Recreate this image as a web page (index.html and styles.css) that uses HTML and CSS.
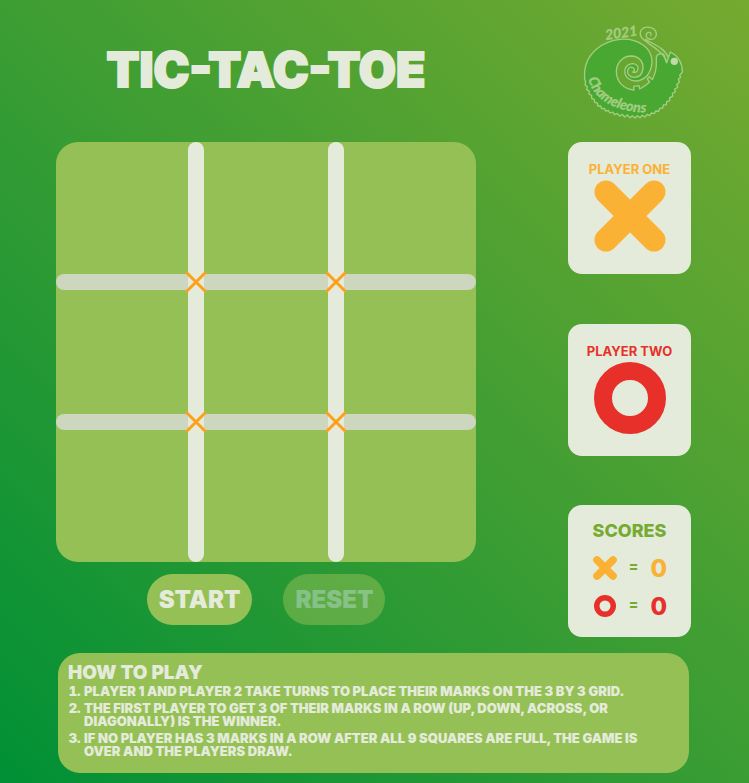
FILE: index.html
```html
<!DOCTYPE html>
<html lang="en">
<head>
<meta charset="utf-8">
<meta name="viewport" content="width=device-width, initial-scale=1">
<title>Tic-Tac-Toe</title>
<link rel="stylesheet" href="styles.css">
</head>
<body>
<svg width="0" height="0" class="defs" aria-hidden="true">
  <symbol id="cross" viewBox="0 0 72 72"><path d="M12 12L60 60M60 12L12 60" fill="none" stroke="currentColor" stroke-width="23" stroke-linecap="round"/></symbol>
  <symbol id="nought" viewBox="0 0 72 72"><circle cx="36" cy="36" r="27" fill="none" stroke="currentColor" stroke-width="18"/></symbol>
</svg>
<div class="page">
  <header class="header">
    <h1 class="title">TIC-TAC-TOE</h1>
    <svg class="logo" viewBox="-6 30 369 300" role="img" aria-label="2021 Chameleons">
      <path class="logo-body" d="M290 158L282 134Q276 128 262 135Q258 140 259 150C260 178 256 190 247 209L238 200L232 207L239 216Q229 226 209 237L207 227L191 229L192 240C160 238 139 214 139 184C140 157 160 138 184 138C208 139 221 156 219 176C217 193 206 202 192 202C178 201 170 192 173 180C175 171 187 168 192 176Q196 183 188 186Q202 190 204 176C205 164 191 157 178 163C160 171 161 194 174 205C194 221 222 211 235 192C254 160 248 125 219 105C179 77 121 84 81 116C53 139 41 173 44 207L47 216L45 224L52 230L50 239L58 243L57 252L65 256L65 265L73 268L74 277L82 279L84 288L92 288L95 296L103 295L107 303L115 301L120 309L128 306L134 314L142 310L149 318L157 313L164 321L172 315L180 323L187 317L195 324L202 317L210 323L217 316L225 321L231 313L239 317L244 309L253 311L257 303L266 304L269 295L278 294L280 285L289 284L290 275L299 272L299 263L308 259L307 250L316 246L314 237L323 232L320 224L328 217L325 208L332 202L329 196L337 186C337 168 331 141 301 126L297 138L290 158Z"/>
      <path class="logo-line" d="M290 158C281 119 226 101 213 80C205 61 220 49 238 52C258 55 264 72 255 83C246 93 226 87 229 73C233 63 247 67 242 76M295 142C284 113 246 101 227 88"/>
      <circle class="logo-eye" cx="313" cy="154" r="11"/>
      <path id="name-curve" d="M55 206C64 252 118 312 244 307" fill="none"/>
      <text class="logo-year" x="107" y="90" transform="rotate(-8 107 90)">2021</text>
      <text class="logo-name"><textPath href="#name-curve">Chameleons</textPath></text>
    </svg>
  </header>
  <main class="game">
    <section class="play">
      <div class="board">
        <div class="cells">
          <button aria-label="Square 1"></button><button aria-label="Square 2"></button><button aria-label="Square 3"></button>
          <button aria-label="Square 4"></button><button aria-label="Square 5"></button><button aria-label="Square 6"></button>
          <button aria-label="Square 7"></button><button aria-label="Square 8"></button><button aria-label="Square 9"></button>
        </div>
        <svg class="lines" viewBox="0 0 420 420" aria-hidden="true">
          <g fill="#cdd6bf"><rect y="132" width="420" height="16" rx="8"/><rect y="272" width="420" height="16" rx="8"/></g>
          <g fill="#e4ebda"><rect x="132" width="16" height="420" rx="8"/><rect x="272" width="16" height="420" rx="8"/></g>
          <g fill="none" stroke="#fda01a" stroke-width="3" stroke-linecap="round">
            <path d="M131 131L149 149M149 131L131 149M271 131L289 149M289 131L271 149M131 271L149 289M149 271L131 289M271 271L289 289M289 271L271 289"/>
          </g>
        </svg>
      </div>
      <div class="actions">
        <button class="action">START</button>
        <button class="action" disabled>RESET</button>
      </div>
    </section>
    <aside class="side">
      <section class="card one"><h2>PLAYER ONE</h2><svg class="mark"><use href="#cross"/></svg></section>
      <section class="card two"><h2>PLAYER TWO</h2><svg class="mark"><use href="#nought"/></svg></section>
      <section class="card scores">
        <h2>SCORES</h2>
        <div class="score one"><svg><use href="#cross"/></svg><span class="equals">=</span><output>0</output></div>
        <div class="score two"><svg class="small"><use href="#nought"/></svg><span class="equals">=</span><output>0</output></div>
      </section>
    </aside>
  </main>
  <section class="rules">
    <h2>HOW TO PLAY</h2>
    <ol>
      <li>PLAYER 1 AND PLAYER 2 TAKE TURNS TO PLACE THEIR MARKS ON THE 3 BY 3 GRID.</li>
      <li>THE FIRST PLAYER TO GET 3 OF THEIR MARKS IN A ROW (UP, DOWN, ACROSS, OR DIAGONALLY) IS THE WINNER.</li>
      <li>IF NO PLAYER HAS 3 MARKS IN A ROW AFTER ALL 9 SQUARES ARE FULL, THE GAME IS OVER AND THE PLAYERS DRAW.</li>
    </ol>
  </section>
</div>
</body>
</html>
```
FILE: styles.css
```css
* { box-sizing: border-box; margin: 0; padding: 0; }
body {
  min-height: 100vh;
  color: #e4ebda;
  font-family: Inter, "Liberation Sans", sans-serif;
  font-weight: 900;
  background: linear-gradient(45deg, #009036, #76aa30);
}
button { border: 0; font: inherit; color: inherit; cursor: pointer; }
.defs { position: absolute; }
.page { padding: 20px 58px 10px 56px; }
.header, .game {
  display: grid;
  grid-template-columns: 420fr 123fr;
  column-gap: 92px;
}
.header { align-items: center; margin-bottom: 22px; }
.title { text-align: center; font-size: 48px; line-height: 60px; font-weight: 900; white-space: nowrap; -webkit-text-stroke: 2px; }
.logo { display: block; width: 100%; }
.logo-body { fill: #48a832; stroke: #a3ce82; stroke-width: 4; stroke-linejoin: round; }
.logo-line { fill: none; stroke: #a3ce82; stroke-width: 4; stroke-linecap: round; }
.logo-eye { fill: #c1dba7; }
.logo-year, .logo-name { fill: #a3ce82; stroke: #a3ce82; stroke-width: 1; font-family: Lato, sans-serif; font-style: italic; font-weight: 700; }
.logo-year { font-size: 42px; }
.logo-name { font-size: 42px; }

.board { position: relative; aspect-ratio: 1; border-radius: 22px; background: #95c056; overflow: hidden; }
.cells { display: grid; grid-template: repeat(3, 1fr) / repeat(3, 1fr); height: 100%; }
.cells button { background: transparent; }
.lines { position: absolute; inset: 0; width: 100%; height: 100%; pointer-events: none; }
.actions { display: flex; justify-content: center; gap: 31px; margin-top: 12px; }
.action { height: 51px; padding: 0 12px; border-radius: 26px; background: #95c056; font-size: 24px; }
.action:disabled { opacity: 0.5; }

.side { display: flex; flex-direction: column; justify-content: space-between; gap: 16px; margin-bottom: -12px; }
.card { display: flex; flex-direction: column; align-items: center; min-height: 132px; border-radius: 14px; background: #e4ebda; padding-top: 20px; }
.card h2 { font-size: 13px; line-height: 14px; font-weight: 700; white-space: nowrap; }
.one { color: #fbb134; }
.two { color: #e73029; }
.mark { width: 72px; height: 72px; margin-top: 4px; }
.scores { padding-top: 14px; }
.card.scores h2 { color: #76aa30; font-size: 18px; line-height: 24px; font-weight: 800; margin-bottom: 6px; }
.score { display: grid; grid-template-columns: 24px 1fr 16px; align-items: center; width: 74px; height: 38px; text-align: center; font-size: 24px; font-weight: 800; }
.score svg { width: 24px; height: 24px; justify-self: center; }
.score .small { width: 22px; height: 22px; }
.equals { color: #76aa30; font-size: 14px; line-height: 20px; padding-bottom: 4px; }

.rules { margin: 28px 2px 0 2px; min-height: 120px; padding: 10px 28px 10px 10px; border-radius: 22px; background: #95c056; }
.rules h2 { font-size: 19px; line-height: 20px; font-weight: 900; }
.rules ol { margin-top: 2px; padding-left: 16px; font-size: 13px; line-height: 13px; font-weight: 900; }
.rules li { margin-bottom: 4px; }
```
